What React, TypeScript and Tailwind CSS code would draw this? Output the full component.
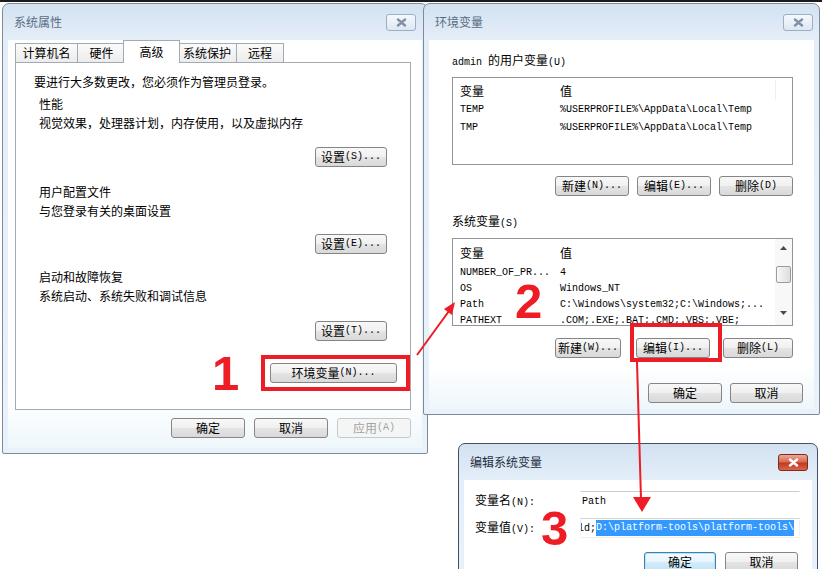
import clsx from "clsx"

const RED = "#ee1c25"
const WIDE = /[\u3000-\u303f\u4e00-\u9fff\uff00-\uffef]/
const RUNS = /[\u3000-\u303f\u4e00-\u9fff\uff00-\uffef]+|[^\u3000-\u303f\u4e00-\u9fff\uff00-\uffef]+/g

// ASCII runs are set half-width, the way SimSun draws them in the old dialogs
function Label({ text }: { text: string }) {
  const runs = text.match(RUNS) ?? []
  return (
    <>
      {runs.map((run, i) =>
        WIDE.test(run) ? (
          <span key={i}>{run}</span>
        ) : (
          <span key={i} className="font-['Liberation_Mono',monospace] text-[10px]">
            {run}
          </span>
        )
      )}
    </>
  )
}

interface ButtonProps {
  label: string
  className?: string
  disabled?: boolean
  focused?: boolean
}

function Button({ label, className, disabled, focused }: ButtonProps) {
  return (
    <div
      className={clsx(
        "flex h-[20px] shrink-0 items-center justify-center whitespace-nowrap rounded-[3px] border text-[12px] leading-[16px]",
        disabled && "border-[#c3c8cc] bg-[#f5f5f5] text-[#a3a3a3]",
        focused &&
          "border-[#3c7fb1] bg-[linear-gradient(to_bottom,#f4fbff_0%,#e6f5fd_50%,#d3ecfb_51%,#c4e4f7_100%)] text-black shadow-[inset_0_0_0_1px_#b9e3f9]",
        !disabled &&
          !focused &&
          "border-[#858585] bg-[linear-gradient(to_bottom,#f8f8f8_0%,#f0f0f0_50%,#e4e4e4_51%,#d9d9d9_100%)] text-black",
        className
      )}
    >
      <Label text={label} />
    </div>
  )
}

function CloseButton({ active }: { active?: boolean }) {
  return (
    <div
      className={clsx(
        "flex h-[17px] w-[30px] items-center justify-center rounded-[3px] border",
        active
          ? "border-[#7a2c1f] bg-[linear-gradient(to_bottom,#eaa999_0%,#d86a50_45%,#c43a1e_55%,#d8654a_100%)]"
          : "border-[#9cafc5] bg-[linear-gradient(to_bottom,#f5f9fd,#dde7f2)]"
      )}
    >
      <svg width="11" height="9" viewBox="0 0 11 9">
        <path
          d="M2 1.5 L9 7.5 M9 1.5 L2 7.5"
          stroke={active ? "#ffffff" : "#8090a6"}
          strokeWidth="2.4"
          strokeLinecap="round"
        />
      </svg>
    </div>
  )
}

interface WindowProps {
  title: string
  active?: boolean
  className: string
  barClass: string
  bodyClass: string
  children: React.ReactNode
}

function Window({ title, active, className, barClass, bodyClass, children }: WindowProps) {
  return (
    <div
      className={clsx(
        "absolute flex flex-col rounded-t-[7px] rounded-b-[2px] border bg-[linear-gradient(to_bottom,#d3e1f1_0px,#e4eef8_36px,#e9f2fa_100%)]",
        active ? "border-[#3f5166]" : "border-[#7d8b9a]",
        className
      )}
    >
      <div className={clsx("flex h-[36px] shrink-0 items-center justify-between pl-[11px]", barClass)}>
        <span className={clsx("text-[12px] leading-[16px]", active ? "text-[#1d2d42]" : "text-[#596d84]")}>
          {title}
        </span>
        <CloseButton active={active} />
      </div>
      <div
        className={clsx(
          "mx-[5px] mb-[5px] flex flex-1 flex-col bg-[linear-gradient(to_bottom,#ffffff_88%,#eef7fb)]",
          bodyClass
        )}
      >
        {children}
      </div>
    </div>
  )
}

const tabs = [
  { name: "计算机名", w: "w-[63px]" },
  { name: "硬件", w: "w-[49px]" },
  { name: "高级", w: "w-[57px]", selected: true },
  { name: "系统保护", w: "w-[60px]" },
  { name: "远程", w: "w-[48px]" },
]

function Section({ title, desc, className }: { title: string; desc: string; className: string }) {
  return (
    <div className={clsx("ml-[5px] leading-[19px]", className)}>
      <p>{title}</p>
      <p>{desc}</p>
    </div>
  )
}

function SystemProperties() {
  return (
    <Window
      title="系统属性"
      className="left-[2px] top-[3px] h-[451px] w-[426px]"
      barClass="pr-[11px]"
      bodyClass=""
    >
      <div className="flex h-[22px] items-end pl-[7px]">
        {tabs.map((t, i) => (
          <div
            key={t.name}
            className={clsx(
              "flex shrink-0 justify-center border border-b-0 border-[#a3aab3] text-[12px] leading-[16px]",
              t.w,
              i > 0 && (t.selected ? "-ml-[3px]" : "-ml-px"),
              t.selected
                ? "relative z-10 -mr-[2px] -mb-px h-[23px] items-start bg-white pt-[3px]"
                : "h-[19px] items-center bg-[linear-gradient(to_bottom,#fbfbfb,#ececec)]"
            )}
          >
            {t.name}
          </div>
        ))}
      </div>
      <div className="ml-[7px] flex h-[348px] w-[396px] flex-col border border-[#a3aab3] bg-white pl-[18px] pt-[11px] text-[12px]">
        <p className="leading-[16px]">要进行大多数更改，您必须作为管理员登录。</p>
        <Section title="性能" desc="视觉效果，处理器计划，内存使用，以及虚拟内存" className="mt-[4px]" />
        <div className="mt-[15px] flex justify-end pr-[23px]">
          <Button label="设置(S)..." className="w-[72px]" />
        </div>
        <Section title="用户配置文件" desc="与您登录有关的桌面设置" className="mt-[15px]" />
        <div className="mt-[14px] flex justify-end pr-[23px]">
          <Button label="设置(E)..." className="w-[72px]" />
        </div>
        <Section title="启动和故障恢复" desc="系统启动、系统失败和调试信息" className="mt-[13px]" />
        <div className="mt-[16px] flex justify-end pr-[23px]">
          <Button label="设置(T)..." className="w-[72px]" />
        </div>
        <div className="mt-[22px] flex justify-end pr-[13px]">
          <Button label="环境变量(N)..." className="w-[127px]" />
        </div>
      </div>
      <div className="ml-[7px] mt-[8px] flex w-[396px] justify-end gap-[9px]">
        <Button label="确定" className="w-[74px]" />
        <Button label="取消" className="w-[74px]" />
        <Button label="应用(A)" className="w-[74px]" disabled />
      </div>
    </Window>
  )
}

function Scrollbar() {
  return (
    <div className="flex w-[17px] shrink-0 flex-col items-center bg-[#f8f8f8]">
      <div className="flex h-[17px] w-full items-center justify-center">
        <svg width="7" height="4" viewBox="0 0 7 4">
          <path d="M3.5 0 L7 4 L0 4 Z" fill="#4a4a4a" />
        </svg>
      </div>
      <div className="mt-[10px] h-[17px] w-[15px] rounded-[2px] border border-[#9c9c9c] bg-[linear-gradient(to_right,#f7f7f7,#dedede)]" />
      <div className="flex-1" />
      <div className="flex h-[14px] w-full items-start justify-center">
        <svg width="7" height="4" viewBox="0 0 7 4">
          <path d="M0 0 L7 0 L3.5 4 Z" fill="#4a4a4a" />
        </svg>
      </div>
    </div>
  )
}

interface VarListProps {
  rows: [string, string][]
  headClass: string
  rowClass: string
  scroll?: boolean
}

function VarList({ rows, headClass, rowClass, scroll }: VarListProps) {
  return (
    <div className="flex h-[88px] overflow-hidden border border-[#8f959c] bg-white">
      <div className="relative min-w-0 flex-1">
        <div className={clsx("flex pl-[7px] text-[12px] leading-[16px]", headClass)}>
          <span className="w-[100px] shrink-0">变量</span>
          <span>值</span>
        </div>
        {!scroll && <div className="absolute right-[16px] top-[2px] h-[20px] w-px bg-[#eceef0]" />}
        {rows.map(([name, value]) => (
          <div
            key={name}
            className={clsx("flex whitespace-nowrap pl-[7px] font-['Liberation_Mono',monospace] text-[10px]", rowClass)}
          >
            <span className="w-[100px] shrink-0">{name}</span>
            <span>{value}</span>
          </div>
        ))}
      </div>
      {scroll && <Scrollbar />}
    </div>
  )
}

function EnvironmentVariables() {
  return (
    <Window
      title="环境变量"
      className="left-[423px] top-[3px] z-10 h-[412px] w-[397px]"
      barClass="pr-[6px]"
      bodyClass="pl-[23px] pr-[21px] text-[12px]"
    >
      <p className="mt-[12px] leading-[16px]">
        <Label text="admin 的用户变量(U)" />
      </p>
      <div className="mt-[6px]">
        <VarList
          headClass="h-[23px] pt-[5px]"
          rowClass="leading-[18px]"
          rows={[
            ["TEMP", "%USERPROFILE%\\AppData\\Local\\Temp"],
            ["TMP", "%USERPROFILE%\\AppData\\Local\\Temp"],
          ]}
        />
      </div>
      <div className="mt-[11px] flex justify-end gap-[8px]">
        <Button label="新建(N)..." className="w-[74px]" />
        <Button label="编辑(E)..." className="w-[74px]" />
        <Button label="删除(D)" className="w-[74px]" />
      </div>
      <p className="mt-[17px] leading-[16px]">
        <Label text="系统变量(S)" />
      </p>
      <div className="mt-[6px]">
        <VarList
          scroll
          headClass="h-[26px] pt-[6px]"
          rowClass="leading-[16px]"
          rows={[
            ["NUMBER_OF_PR...", "4"],
            ["OS", "Windows_NT"],
            ["Path", "C:\\Windows\\system32;C:\\Windows;..."],
            ["PATHEXT", ".COM;.EXE;.BAT;.CMD;.VBS;.VBE;"],
          ]}
        />
      </div>
      <div className="mt-[12px] flex justify-end gap-[8px]">
        <Button label="新建(W)..." className="w-[66px]" />
        <Button label="编辑(I)..." className="ml-[7px] w-[74px]" />
        <Button label="删除(L)" className="ml-[5px] w-[70px]" />
      </div>
      <div className="-mr-[10px] mt-[25px] flex justify-end gap-[8px]">
        <Button label="确定" className="w-[74px]" />
        <Button label="取消" className="w-[73px]" />
      </div>
    </Window>
  )
}

function EditVariable() {
  return (
    <Window
      title="编辑系统变量"
      active
      className="left-[458px] top-[443px] z-20 h-[150px] w-[360px]"
      barClass="pr-[9px]"
      bodyClass="pl-[11px] pt-[11px] text-[12px]"
    >
      <div className="flex h-[20px] items-center">
        <span className="w-[105px] shrink-0 leading-[16px]">
          <Label text="变量名(N):" />
        </span>
        <div className="flex h-[20px] w-[220px] items-center border border-transparent border-t-[#c9cdd2] pl-[1px] font-['Liberation_Mono',monospace] text-[10px]">
          Path
        </div>
      </div>
      <div className="mt-[7px] flex h-[20px] items-center">
        <span className="w-[105px] shrink-0 leading-[16px]">
          <Label text="变量值(V):" />
        </span>
        <div className="flex h-[20px] w-[220px] items-center overflow-hidden whitespace-nowrap border border-[#eef2f6] border-t-[#d2d6db] font-['Liberation_Mono',monospace] text-[10px]">
          <span className="-ml-[3px]">ld;</span>
          <span className="bg-[#3399ff] leading-[16px] text-white">D:\platform-tools\platform-tools\</span>
        </div>
      </div>
      <div className="mt-[14px] flex justify-end gap-[9px] pr-[14px]">
        <Button label="确定" className="w-[72px]" focused />
        <Button label="取消" className="w-[73px]" />
      </div>
    </Window>
  )
}

// Red step marks, boxes and arrows laid over the three dialogs
function Callouts() {
  const digit = "absolute font-['Liberation_Sans',Arial,sans-serif] text-[49px] font-bold leading-none text-[#ee1c25]"
  return (
    <>
      <div className="absolute left-[261px] top-[355px] z-30 h-[36px] w-[149px] border-[4px] border-[#ee1c25]" />
      <div className="absolute left-[630px] top-[323px] z-30 h-[39px] w-[92px] border-[4px] border-[#ee1c25]" />
      <span className={clsx(digit, "left-[212px] top-[349px] z-30")}>1</span>
      <span className={clsx(digit, "left-[515px] top-[277px] z-30")}>2</span>
      <span className={clsx(digit, "left-[541px] top-[504px] z-30")}>3</span>
      <svg className="pointer-events-none absolute left-0 top-0 z-30" width="822" height="569">
        <line x1="417" y1="355" x2="449" y2="311" stroke={RED} strokeWidth="2" />
        <polygon points="455,302 452,315 444,309" fill={RED} />
        <line x1="637" y1="362" x2="641" y2="499" stroke={RED} strokeWidth="2" />
        <polygon points="642,512 633,497 651,497" fill={RED} />
      </svg>
    </>
  )
}

export default function App() {
  return (
    <div className="relative h-[569px] w-[822px] overflow-hidden bg-white font-['Noto_Sans_CJK_SC',sans-serif] text-black">
      <div className="h-[2px] bg-[#1c1c1c]" />
      <SystemProperties />
      <EnvironmentVariables />
      <EditVariable />
      <Callouts />
    </div>
  )
}
